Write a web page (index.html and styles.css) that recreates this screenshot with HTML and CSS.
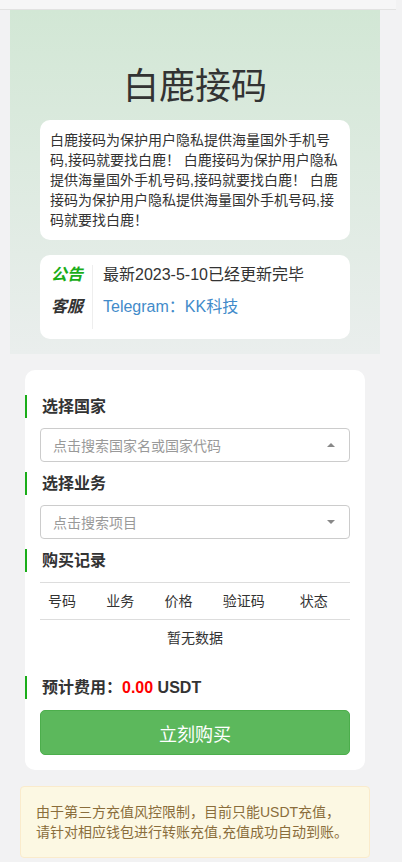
FILE: index.html
```html
<!DOCTYPE html>
<html lang="zh-CN">
<head>
  <meta charset="UTF-8" />
  <meta name="viewport" content="width=device-width, initial-scale=1.0" />
  <title>白鹿接码</title>
  <link rel="stylesheet" href="styles.css">
</head>
<body>
  <div class="topbar"></div>

  <div class="page">
    <!-- 头部 -->
    <div class="hero">
      <h1 class="hero-title">白鹿接码</h1>
      <div class="intro">白鹿接码为保护用户隐私提供海量国外手机号码,接码就要找白鹿！ 白鹿接码为保护用户隐私提供海量国外手机号码,接码就要找白鹿！ 白鹿接码为保护用户隐私提供海量国外手机号码,接码就要找白鹿！</div>
      <div class="info-box">
        <div class="info-labels">
          <div class="info-row label-green">公告</div>
          <div class="info-row">客服</div>
        </div>
        <div class="info-values">
          <div class="info-row">最新2023-5-10已经更新完毕</div>
          <div class="info-row"><a href="#" class="tg-link">Telegram：KK科技</a></div>
        </div>
      </div>
    </div>

    <!-- 下单 -->
    <div class="order">
      <div class="sec-title">选择国家</div>
      <div class="picker">
        <span>点击搜索国家名或国家代码</span>
        <i class="caret caret-up"></i>
      </div>

      <div class="sec-title">选择业务</div>
      <div class="picker">
        <span>点击搜索项目</span>
        <i class="caret"></i>
      </div>

      <div class="sec-title">购买记录</div>
      <table class="records">
        <thead>
          <tr><th>号码</th><th>业务</th><th>价格</th><th>验证码</th><th>状态</th></tr>
        </thead>
        <tbody>
          <tr><td colspan="5" class="empty">暂无数据</td></tr>
        </tbody>
      </table>

      <div class="sec-title cost">预计费用：<span class="price">0.00</span> USDT</div>
      <button class="buy-btn">立刻购买</button>
    </div>

    <!-- 提示 -->
    <div class="notice">由于第三方充值风控限制，目前只能USDT充值，<br>请针对相应钱包进行转账充值,充值成功自动到账。</div>
  </div>
</body>
</html>
```

FILE: styles.css
```css
* {
  margin: 0; padding: 0;
  box-sizing: border-box;
}
body {
  background: #f2f2f3;
  color: #333;
  font-family: "Liberation Sans", "Noto Sans CJK SC", sans-serif;
  font-size: 14px;
}
.topbar {
  width: 396px;
  height: 10px;
  background: #f6f6f7;
  border-bottom: 1px solid #e2e2e2;
}
.page {
  width: 390px;
}
.hero {
  margin: 0 10px;
  padding: 52px 30px 15px;
  background: linear-gradient(#d2e7d5, #eaeeed);
}
.hero-title {
  font-size: 36px;
  font-weight: normal;
  line-height: 50px;
  text-align: center;
  color: #333;
  margin-bottom: 8px;
}
.intro {
  background: #fff;
  border-radius: 10px;
  padding: 10px;
  line-height: 20px;
}
.info-box {
  display: flex;
  background: #fff;
  border-radius: 10px;
  margin-top: 15px;
  padding: 10px 11px;
  font-size: 16px;
}
.info-labels {
  font-weight: bold;
  font-style: italic;
  padding-right: 9px;
  border-right: 1px solid #eee;
}
.info-values {
  padding-left: 10px;
}
.info-row {
  line-height: 20px;
  padding-bottom: 12px;
}
.label-green {
  color: #1aad19;
}
.tg-link {
  color: #428bca;
  text-decoration: none;
}
.order {
  margin: 16px 25px 0;
  padding: 25px 15px 15px;
  background: #fff;
  border-radius: 10px;
}
.sec-title {
  margin: 0 0 10px -15px;
  padding-left: 15px;
  border-left: 2px solid #1aad19;
  font-size: 16px;
  font-weight: bold;
  line-height: 23px;
}
.picker + .sec-title {
  margin-top: 10px;
}
.picker {
  display: flex;
  justify-content: space-between;
  align-items: center;
  height: 34px;
  padding: 0 14px 0 12px;
  border: 1px solid #ccc;
  border-radius: 4px;
  color: #999;
}
.caret {
  width: 0;
  height: 0;
  border-left: 4px solid transparent;
  border-right: 4px solid transparent;
  border-top: 4px solid #888;
}
.caret-up {
  border-top: 0;
  border-bottom: 4px solid #888;
}
.records {
  width: 100%;
  border-collapse: collapse;
  border-top: 1px solid #ddd;
}
.records th {
  font-weight: normal;
  text-align: left;
  padding: 8px;
  line-height: 20px;
  border-bottom: 1px solid #ddd;
}
.records td.empty {
  text-align: center;
  padding: 8px;
  line-height: 20px;
}
.cost {
  margin-top: 20px;
}
.price {
  color: #f00;
}
.buy-btn {
  display: block;
  width: 100%;
  height: 45px;
  margin-top: 11px;
  background: #5cb85c;
  border: 1px solid #4cae4c;
  border-radius: 5px;
  color: #fff;
  font-family: inherit;
  font-size: 18px;
  cursor: pointer;
}
.notice {
  margin: 16px 20px 0;
  padding: 15px;
  background: #fcf8e3;
  border: 1px solid #faebcc;
  border-radius: 4px;
  color: #8a6d3b;
  line-height: 20px;
}
```
